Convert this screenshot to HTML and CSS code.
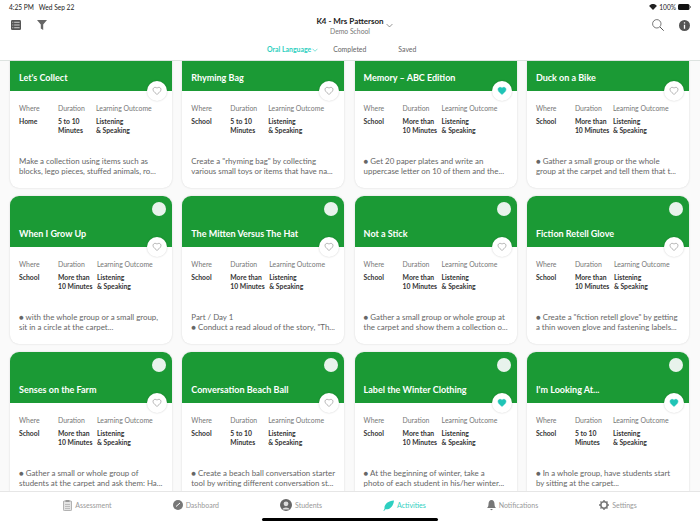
FILE: index.html
```html
<!DOCTYPE html>
<html lang="en">

<head>
  <meta charset="utf-8">
  <title>Activities</title>
  <link rel="stylesheet" href="styles.css">
</head>

<body>
  <svg class="defs" width="0" height="0">
    <symbol id="heart" viewBox="0 0 24 24">
      <path d="M12 20.5l-1.3-1.2C5.7 14.8 2.5 11.9 2.5 8.3 2.5 5.4 4.8 3.2 7.6 3.2c1.7 0 3.3.8 4.4 2 1.1-1.2 2.7-2 4.4-2 2.8 0 5.1 2.2 5.1 5.1 0 3.6-3.2 6.5-8.2 11z" />
    </symbol>
    <symbol id="chevron" viewBox="0 0 12 7">
      <path d="M1 1l5 5 5-5" fill="none" stroke="currentColor" stroke-width="1.2" />
    </symbol>
  </svg>

  <header class="top">
    <div class="status">
      <span>4:25 PM&nbsp;&nbsp; Wed Sep 22</span>
      <span class="status-right">
        <svg width="8" height="6" viewBox="0 0 18 14"><path d="M9 14L0 4.500C5-1.200 13-1.200 18 4.500z" fill="#222" /></svg>
        100%
        <svg width="13" height="6" viewBox="0 0 13 6"><rect width="11.500" height="6" rx="1.500" fill="#111" /><rect x="12" y="2" width="1" height="2" fill="#888" /></svg>
      </span>
    </div>
    <div class="bar">
      <div class="bar-side">
        <svg width="10" height="10" viewBox="0 0 11 11">
          <rect width="11" height="11" rx="1.500" fill="#555" />
          <path d="M1.500 2.500h1M3.500 2.500h6M1.500 5.500h1M3.500 5.500h6M1.500 8.500h1M3.500 8.500h6" stroke="#ddd" stroke-width="1" />
        </svg>
        <svg class="filter" width="10" height="10" viewBox="0 0 10 10"><path d="M0 0h10L6.200 4.600V10L3.800 8.400V4.600z" fill="#666" /></svg>
      </div>
      <div class="class-name">
        <div class="class-title">K4 - Mrs Patterson</div>
        <div class="class-sub">Demo School</div>
        <svg class="class-chevron" width="7" height="5"><use href="#chevron" /></svg>
      </div>
      <div class="bar-side bar-right">
        <svg width="12" height="12" viewBox="0 0 12 12"><circle cx="4.800" cy="4.800" r="4.200" fill="none" stroke="#555" stroke-width=".8" /><path d="M8 8l3.700 3.700" stroke="#555" stroke-width="1" /></svg>
        <svg class="info" width="11" height="11" viewBox="0 0 11 11"><circle cx="5.500" cy="5.500" r="5.500" fill="#555" /><path d="M5.500 2.300v1.200M5.500 4.700v4" stroke="#fff" stroke-width="1.300" /></svg>
      </div>
    </div>
    <nav class="tabs">
      <a class="tab tab-active">Oral Language<svg width="6" height="4"><use href="#chevron" /></svg></a>
      <a class="tab">Completed</a>
      <a class="tab">Saved</a>
    </nav>
  </header>

  <main class="content">
    <div class="cards">

      <article class="card">
        <div class="card-head"><span class="dot"></span><h2>Let's Collect</h2><span class="fav"><svg><use href="#heart" /></svg></span></div>
        <div class="meta">
          <span class="label">Where</span><span class="label">Duration</span><span class="label">Learning Outcome</span>
          <span class="value">Home</span><span class="value">5 to 10<br>Minutes</span><span class="value">Listening<br>&amp; Speaking</span>
        </div>
        <p>Make a collection using items such as<br>blocks, lego pieces, stuffed animals, ro...</p>
      </article>

      <article class="card">
        <div class="card-head"><span class="dot"></span><h2>Rhyming Bag</h2><span class="fav"><svg><use href="#heart" /></svg></span></div>
        <div class="meta">
          <span class="label">Where</span><span class="label">Duration</span><span class="label">Learning Outcome</span>
          <span class="value">School</span><span class="value">5 to 10<br>Minutes</span><span class="value">Listening<br>&amp; Speaking</span>
        </div>
        <p>Create a "rhyming bag" by collecting<br>various small toys or items that have na...</p>
      </article>

      <article class="card">
        <div class="card-head"><span class="dot"></span><h2>Memory – ABC Edition</h2><span class="fav fav-on"><svg><use href="#heart" /></svg></span></div>
        <div class="meta meta-long">
          <span class="label">Where</span><span class="label">Duration</span><span class="label">Learning Outcome</span>
          <span class="value">School</span><span class="value">More than<br>10 Minutes</span><span class="value">Listening<br>&amp; Speaking</span>
        </div>
        <p>● Get 20 paper plates and write an<br>uppercase letter on 10 of them and the...</p>
      </article>

      <article class="card">
        <div class="card-head"><span class="dot"></span><h2>Duck on a Bike</h2><span class="fav"><svg><use href="#heart" /></svg></span></div>
        <div class="meta">
          <span class="label">Where</span><span class="label">Duration</span><span class="label">Learning Outcome</span>
          <span class="value">School</span><span class="value">More than<br>10 Minutes</span><span class="value">Listening<br>&amp; Speaking</span>
        </div>
        <p>● Gather a small group or the whole<br>group at the carpet and tell them that t...</p>
      </article>

      <article class="card">
        <div class="card-head"><span class="dot"></span><h2>When I Grow Up</h2><span class="fav"><svg><use href="#heart" /></svg></span></div>
        <div class="meta meta-long">
          <span class="label">Where</span><span class="label">Duration</span><span class="label">Learning Outcome</span>
          <span class="value">School</span><span class="value">More than<br>10 Minutes</span><span class="value">Listening<br>&amp; Speaking</span>
        </div>
        <p>● with the whole group or a small group,<br>sit in a circle at the carpet...</p>
      </article>

      <article class="card">
        <div class="card-head"><span class="dot"></span><h2>The Mitten Versus The Hat</h2><span class="fav"><svg><use href="#heart" /></svg></span></div>
        <div class="meta meta-long">
          <span class="label">Where</span><span class="label">Duration</span><span class="label">Learning Outcome</span>
          <span class="value">School</span><span class="value">More than<br>10 Minutes</span><span class="value">Listening<br>&amp; Speaking</span>
        </div>
        <p>Part / Day 1<br>● Conduct a read aloud of the story, "Th...</p>
      </article>

      <article class="card">
        <div class="card-head"><span class="dot"></span><h2>Not a Stick</h2><span class="fav"><svg><use href="#heart" /></svg></span></div>
        <div class="meta meta-long">
          <span class="label">Where</span><span class="label">Duration</span><span class="label">Learning Outcome</span>
          <span class="value">School</span><span class="value">More than<br>10 Minutes</span><span class="value">Listening<br>&amp; Speaking</span>
        </div>
        <p>● Gather a small group or whole group at<br>the carpet and show them a collection o...</p>
      </article>

      <article class="card">
        <div class="card-head"><span class="dot"></span><h2>Fiction Retell Glove</h2><span class="fav"><svg><use href="#heart" /></svg></span></div>
        <div class="meta meta-long">
          <span class="label">Where</span><span class="label">Duration</span><span class="label">Learning Outcome</span>
          <span class="value">School</span><span class="value">More than<br>10 Minutes</span><span class="value">Listening<br>&amp; Speaking</span>
        </div>
        <p>● Create a "fiction retell glove" by getting<br>a thin woven glove and fastening labels...</p>
      </article>

      <article class="card">
        <div class="card-head"><span class="dot"></span><h2>Senses on the Farm</h2><span class="fav"><svg><use href="#heart" /></svg></span></div>
        <div class="meta meta-long">
          <span class="label">Where</span><span class="label">Duration</span><span class="label">Learning Outcome</span>
          <span class="value">School</span><span class="value">More than<br>10 Minutes</span><span class="value">Listening<br>&amp; Speaking</span>
        </div>
        <p>● Gather a small or whole group of<br>students at the carpet and ask them: Ha...</p>
      </article>

      <article class="card">
        <div class="card-head"><span class="dot"></span><h2>Conversation Beach Ball</h2><span class="fav"><svg><use href="#heart" /></svg></span></div>
        <div class="meta">
          <span class="label">Where</span><span class="label">Duration</span><span class="label">Learning Outcome</span>
          <span class="value">School</span><span class="value">5 to 10<br>Minutes</span><span class="value">Listening<br>&amp; Speaking</span>
        </div>
        <p>● Create a beach ball conversation starter<br>tool by writing different conversation st...</p>
      </article>

      <article class="card">
        <div class="card-head"><span class="dot"></span><h2>Label the Winter Clothing</h2><span class="fav fav-on"><svg><use href="#heart" /></svg></span></div>
        <div class="meta meta-long">
          <span class="label">Where</span><span class="label">Duration</span><span class="label">Learning Outcome</span>
          <span class="value">School</span><span class="value">More than<br>10 Minutes</span><span class="value">Listening<br>&amp; Speaking</span>
        </div>
        <p>● At the beginning of winter, take a<br>photo of each student in his/her winter...</p>
      </article>

      <article class="card">
        <div class="card-head"><span class="dot"></span><h2>I'm Looking At...</h2><span class="fav fav-on"><svg><use href="#heart" /></svg></span></div>
        <div class="meta">
          <span class="label">Where</span><span class="label">Duration</span><span class="label">Learning Outcome</span>
          <span class="value">School</span><span class="value">5 to 10<br>Minutes</span><span class="value">Listening<br>&amp; Speaking</span>
        </div>
        <p>● In a whole group, have students start<br>by sitting at the carpet...</p>
      </article>

    </div>
  </main>

  <footer class="tabbar">
    <a class="tabbar-item">
      <svg width="9" height="11" viewBox="0 0 9 11"><rect x=".4" y="1" width="8.200" height="9.600" rx="1" fill="#e4e4e4" stroke="#999" stroke-width=".8" /><rect x="2.500" y="0" width="4" height="2" fill="#999" /><path d="M2 4.500h5M2 6.500h5M2 8.500h5" stroke="#aaa" stroke-width=".7" /></svg>
      Assessment
    </a>
    <a class="tabbar-item">
      <svg width="10" height="10" viewBox="0 0 10 10"><circle cx="5" cy="5" r="5" fill="#777" /><path d="M3 6.500L7 3" stroke="#fff" stroke-width="1" /></svg>
      Dashboard
    </a>
    <a class="tabbar-item">
      <svg width="12" height="12" viewBox="0 0 12 12"><circle cx="6" cy="6" r="6" fill="#666" /><circle cx="6" cy="4.800" r="2.400" fill="#ddd" /><path d="M2.300 10.500C3 7.800 9 7.800 9.700 10.500" fill="#ddd" /></svg>
      Students
    </a>
    <a class="tabbar-item tabbar-active">
      <svg width="11" height="11" viewBox="0 0 11 11"><path d="M1.500 9C1 4 5 1 11 .5 10.500 6 7 10 2.500 9.200L1 11 .4 10.500z" fill="#2ecfc0" /></svg>
      Activities
    </a>
    <a class="tabbar-item">
      <svg width="9" height="11" viewBox="0 0 9 11"><path d="M4.500 0C6.500 0 7.500 1.800 7.500 4c0 2 .5 3 1.500 4H0c1-1 1.500-2 1.500-4 0-2.200 1-4 3-4zM3.300 9h2.400c0 1.500-2.400 1.500-2.400 0z" fill="#777" /></svg>
      Notifications
    </a>
    <a class="tabbar-item">
      <svg width="10" height="10" viewBox="0 0 10 10"><circle cx="5" cy="5" r="3.200" fill="none" stroke="#777" stroke-width="1.600" /><path d="M5 0v2M5 8v2M0 5h2M8 5h2M1.500 1.500l1.400 1.400M7.100 7.100l1.400 1.400M8.500 1.500L7.100 2.900M2.900 7.100L1.500 8.500" stroke="#777" stroke-width="1.400" /></svg>
      Settings
    </a>
  </footer>
  <div class="home-bar"></div>
</body>

</html>
```

FILE: styles.css
```css
* {
  box-sizing: border-box;
}

body {
  background-color: #fff;
  color: #333;
  display: flex;
  flex-direction: column;
  font-family: Lato, "Noto Sans", sans-serif;
  height: 525px;
  margin: 0;
  overflow: hidden;
  position: relative;
}

.defs {
  position: absolute;
}

.top {
  background-color: #fff;
  border-bottom: 1px solid #dde3e0;
  flex: none;
  height: 61px;
}

.status {
  align-items: center;
  color: #222;
  display: flex;
  font-size: 6.600px;
  height: 14px;
  justify-content: space-between;
  padding: 0 9px;
}

.status-right {
  align-items: center;
  display: flex;
  gap: 2px;
}

.bar {
  align-items: flex-start;
  display: grid;
  grid-template-columns: 1fr auto 1fr;
  height: 28px;
}

.bar-side {
  align-items: center;
  display: flex;
  gap: 16px;
  height: 22px;
  padding-left: 11px;
}

.bar-right {
  gap: 15px;
  justify-content: flex-end;
  padding: 0 10px 0 0;
}

.class-name {
  position: relative;
  padding-top: 2px;
  text-align: center;
}

.class-title {
  color: #222;
  font-size: 8px;
  font-weight: 700;
  line-height: 10px;
}

.class-sub {
  color: #777;
  font-size: 6.800px;
  line-height: 10px;
}

.class-chevron {
  color: #666;
  left: 100%;
  margin-left: 2px;
  position: absolute;
  top: 9px;
}

.tabs {
  display: flex;
  font-size: 6.900px;
  height: 18px;
  padding: 3px 0 0 267px;
}

.tab {
  color: #666;
  margin-right: 32px;
}

.tab-active {
  color: #2ecfc0;
  font-weight: 700;
  margin-right: 15px;
}

.tab-active svg {
  margin-left: 1px;
}

.content {
  background-color: #fafafa;
  flex: 1;
  overflow: hidden;
}

.cards {
  display: grid;
  gap: 8px 10.300px;
  grid-template-columns: repeat(4, 162px);
  margin-top: -21px;
  padding: 0 10px;
}

.card {
  background-color: #fff;
  border-radius: 9px;
  box-shadow: 0 0 2px rgba(0, 0, 0, .16);
  height: 148px;
}

.card-head {
  background-color: #1b9a35;
  border-radius: 9px 9px 0 0;
  height: 51px;
  position: relative;
}

h2 {
  color: #fff;
  font-size: 9px;
  font-weight: 700;
  left: 9px;
  margin: 0;
  position: absolute;
  top: 32px;
}

.dot {
  background-color: #e8f3ec;
  border-radius: 50%;
  height: 14px;
  position: absolute;
  right: 6px;
  top: 6px;
  width: 14px;
}

.fav {
  align-items: center;
  background-color: #fff;
  border-radius: 50%;
  box-shadow: 0 0 2px rgba(0, 0, 0, .2);
  display: flex;
  height: 20px;
  justify-content: center;
  position: absolute;
  right: 5px;
  top: 41px;
  width: 20px;
}

.fav svg {
  fill: none;
  height: 10px;
  stroke: #777;
  stroke-width: 1.300;
  width: 10px;
}

.fav-on svg {
  fill: #1fc4b6;
  stroke: #1fc4b6;
}

.meta {
  display: grid;
  grid-template-columns: 39px 38px 1fr;
  padding: 12px 9px 0;
}

.meta-long {
  grid-template-columns: 39px 39px 1fr;
}

.label {
  color: #777;
  font-size: 6.900px;
  line-height: 10px;
  margin-bottom: 4px;
}

.value {
  color: #333;
  font-size: 6.800px;
  font-weight: 700;
  line-height: 9px;
}

p {
  color: #666;
  font-size: 7.900px;
  line-height: 10.300px;
  margin: 21px 0 0;
  padding: 0 9px;
  white-space: nowrap;
}

.tabbar {
  background-color: #fff;
  border-top: 1px solid #e6e6e6;
  display: flex;
  flex: none;
  gap: 61px;
  height: 34px;
  justify-content: center;
  padding-top: 6px;
}

.tabbar-item {
  align-items: center;
  color: #999;
  display: flex;
  font-size: 7px;
  gap: 3px;
  height: 14px;
}

.tabbar-active {
  color: #2ecfc0;
}

.home-bar {
  background-color: #000;
  border-radius: 2px;
  bottom: 4px;
  height: 3px;
  left: 262px;
  position: absolute;
  width: 176px;
}
```
